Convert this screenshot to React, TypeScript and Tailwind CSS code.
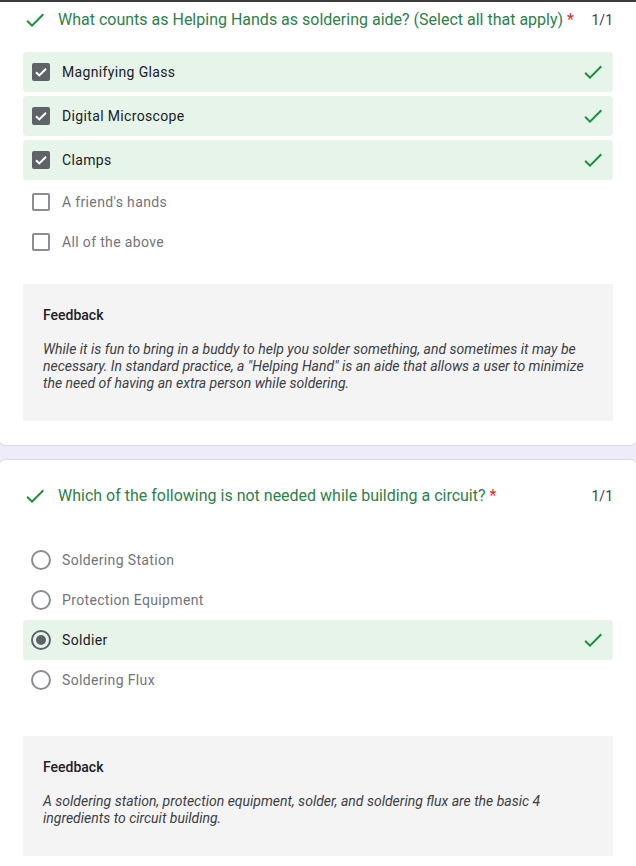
import type { ReactNode } from "react";

type Option = {
  label: string;
  selected: boolean;
  gap: string;
};

type Question = {
  title: string;
  kind: "checkbox" | "radio";
  options: Option[];
  feedback: string;
};

const questions: Question[] = [
  {
    title: "What counts as Helping Hands as soldering aide? (Select all that apply)",
    kind: "checkbox",
    options: [
      { label: "Magnifying Glass", selected: true, gap: "mt-0" },
      { label: "Digital Microscope", selected: true, gap: "mt-1" },
      { label: "Clamps", selected: true, gap: "mt-1" },
      { label: "A friend's hands", selected: false, gap: "mt-0.5" },
      { label: "All of the above", selected: false, gap: "mt-0" },
    ],
    feedback:
      'While it is fun to bring in a buddy to help you solder something, and sometimes it may be necessary. In standard practice, a "Helping Hand" is an aide that allows a user to minimize the need of having an extra person while soldering.',
  },
  {
    title: "Which of the following is not needed while building a circuit?",
    kind: "radio",
    options: [
      { label: "Soldering Station", selected: false, gap: "mt-0" },
      { label: "Protection Equipment", selected: false, gap: "mt-0" },
      { label: "Soldier", selected: true, gap: "mt-0" },
      { label: "Soldering Flux", selected: false, gap: "mt-0" },
    ],
    feedback:
      "A soldering station, protection equipment, solder, and soldering flux are the basic 4 ingredients to circuit building.",
  },
];

function CheckIcon({ className }: { className?: string }) {
  return (
    <svg viewBox="0 0 24 24" className={className} fill="currentColor">
      <path d="M9 16.17L4.83 12l-1.42 1.41L9 19 21 7l-1.41-1.41z" />
    </svg>
  );
}

function Checkbox({ checked }: { checked: boolean }) {
  if (!checked) {
    return <div className="h-[18px] w-[18px] shrink-0 rounded-[2px] border-2 border-[#8a8d91]" />;
  }
  return (
    <div className="flex h-[18px] w-[18px] shrink-0 items-center justify-center rounded-[2px] bg-[#5f6368]">
      <svg viewBox="0 0 18 18" className="h-[18px] w-[18px]" fill="none">
        <path d="M4 9.2l3.3 3.2L14 5.8" stroke="white" strokeWidth="2" />
      </svg>
    </div>
  );
}

function Radio({ checked }: { checked: boolean }) {
  return (
    <div
      className={
        checked
          ? "flex h-5 w-5 shrink-0 items-center justify-center rounded-full border-2 border-[#5f6368]"
          : "h-5 w-5 shrink-0 rounded-full border-2 border-[#8a8d91]"
      }
    >
      {checked && <div className="h-[10px] w-[10px] rounded-full bg-[#5f6368]" />}
    </div>
  );
}

function OptionRow({ option, kind }: { option: Option; kind: Question["kind"] }) {
  const control: ReactNode =
    kind === "checkbox" ? <Checkbox checked={option.selected} /> : <Radio checked={option.selected} />;

  return (
    <div
      className={`${option.gap} flex h-10 items-center rounded-[4px] ${
        option.selected ? "bg-[#e6f4ea]" : ""
      } ${kind === "checkbox" ? "pl-[9px]" : "pl-2"} pr-2`}
    >
      {control}
      <span
        className={`${kind === "checkbox" ? "ml-3" : "ml-[11px]"} flex-1 text-[14px] tracking-[0.35px] ${
          option.selected ? "text-[#202124]" : "text-[#70757a]"
        }`}
      >
        {option.label}
      </span>
      {option.selected && <CheckIcon className="h-6 w-6 text-[#1e8e3e]" />}
    </div>
  );
}

function Feedback({ text, top }: { text: string; top: string }) {
  return (
    <div className={`${top} bg-[#f4f4f4] px-5 pt-[21px] pb-[29px]`}>
      <div className="text-[14px] font-medium leading-5 text-[#202124]">Feedback</div>
      <p className="mt-4 text-[14px] italic leading-[17px] text-[#3c4043]">{text}</p>
    </div>
  );
}

function QuestionCard({
  question,
  cardClass,
  optionsTop,
  feedbackTop,
}: {
  question: Question;
  cardClass: string;
  optionsTop: string;
  feedbackTop: string;
}) {
  return (
    <div className={`ml-[-2px] w-[640px] border border-[#dadce0] bg-white px-6 pb-6 ${cardClass}`}>
      <div className="flex items-start">
        <CheckIcon className="h-6 w-6 shrink-0 text-[#1e8e3e]" />
        <div className="ml-[11px] flex-1 whitespace-nowrap text-[16px] leading-6 text-[#2e8049]">
          {question.title}
          <span className="text-[#d93025]"> *</span>
        </div>
        <div className="ml-2 text-[14px] leading-6 text-[#3c4043]">1/1</div>
      </div>

      <div className={`${optionsTop} flex flex-col`}>
        {question.options.map((option) => (
          <OptionRow key={option.label} option={option} kind={question.kind} />
        ))}
      </div>

      <Feedback text={question.feedback} top={feedbackTop} />
    </div>
  );
}

export default function App() {
  return (
    <div className="h-[866px] w-[636px] overflow-hidden bg-[#f0ebf8] [font-family:Roboto,'Noto_Sans',sans-serif]">
      <div className="h-[2px] bg-[#3c3c3c]" />
      <QuestionCard
        question={questions[0]}
        cardClass="rounded-b-lg border-t-0 pt-[6px]"
        optionsTop="mt-5"
        feedbackTop="mt-[22px]"
      />
      <div className="h-[13px]" />
      <QuestionCard
        question={questions[1]}
        cardClass="rounded-lg pt-6"
        optionsTop="mt-8"
        feedbackTop="mt-9"
      />
    </div>
  );
}
